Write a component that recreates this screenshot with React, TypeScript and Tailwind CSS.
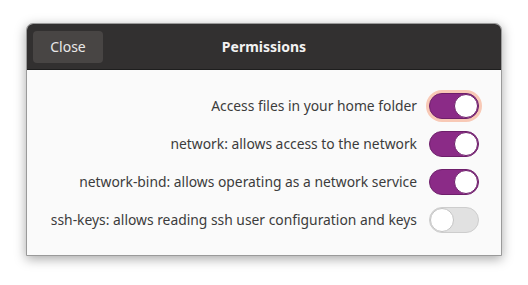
import React from 'react';

const permissions = [
  { label: 'Access files in your home folder', on: true, focus: true },
  { label: 'network: allows access to the network', on: true, focus: false },
  { label: 'network-bind: allows operating as a network service', on: true, focus: false },
  { label: 'ssh-keys: allows reading ssh user configuration and keys', on: false, focus: false },
];

const Switch = ({ on, focus }: { on: boolean; focus: boolean }) => (
  <div
    className={
      'flex h-[26px] w-[50px] items-center rounded-full border ' +
      (on ? 'justify-end border-[#6e1f6b] bg-[#8b2b87] ' : 'justify-start border-[#cdcdcd] bg-[#e1e1e1] ') +
      (focus ? 'ring-[3px] ring-[#f8c9b6]' : '')
    }
  >
    <div className={'h-[24px] w-[24px] rounded-full bg-white ' + (on ? 'border border-[#6e1f6b]' : 'border border-[#c4c4c4]')} />
  </div>
);

export default function App() {
  return (
    <div className="flex h-[285px] w-[528px] bg-white pl-[26px] pt-[23px]" style={{ fontFamily: '"Noto Sans", sans-serif' }}>
      <div className="flex h-[233px] w-[476px] flex-col overflow-hidden rounded-t-[7px] border border-[#9a9a9a] bg-[#fafafa] shadow-[0_3px_12px_rgba(0,0,0,0.35)]">
        <div className="relative flex h-[46px] items-center border-b border-[#1e1e1e] bg-[#323030] px-[6px]">
          <button className="h-[32px] w-[70px] rounded-[4px] bg-[#484544] text-[14px] text-[#e8e8e8]">Close</button>
          <div className="absolute inset-0 flex items-center justify-center text-[14px] font-bold text-[#f2f2f2] pointer-events-none">
            Permissions
          </div>
        </div>
        <div className="flex flex-col gap-[12px] pr-[22px] pt-[23px]">
          {permissions.map((p) => (
            <div key={p.label} className="flex items-center justify-end gap-[12px]">
              <span className="text-[13.85px] text-[#3c3c3c]">{p.label}</span>
              <Switch on={p.on} focus={p.focus} />
            </div>
          ))}
        </div>
      </div>
    </div>
  );
}
